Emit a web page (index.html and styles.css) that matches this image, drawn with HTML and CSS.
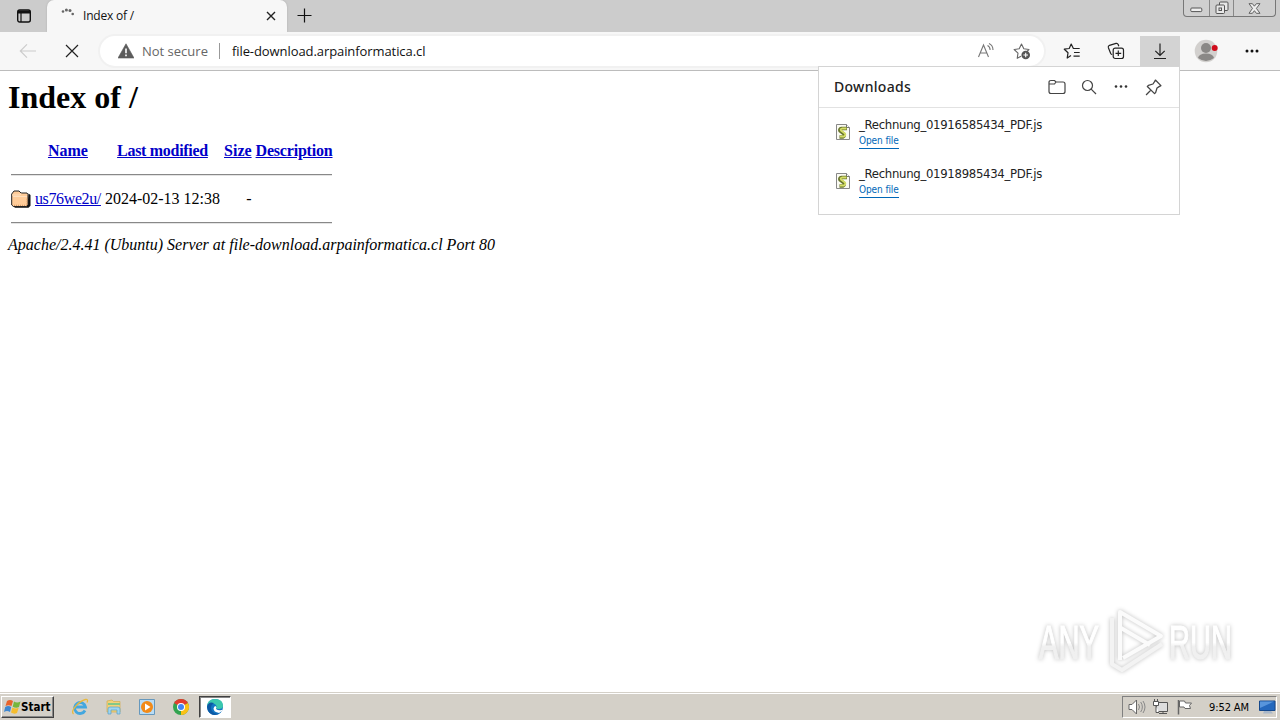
FILE: index.html
```html
<!DOCTYPE html>
<html lang="en">
<head>
<meta charset="utf-8">
<title>Index of /</title>
<link rel="stylesheet" href="styles.css">
</head>
<body>
<header class="tabstrip">
  <div class="tab-actions"><svg width="16" height="16" viewBox="0 0 16 16" fill="none" stroke="#111"><rect x="1.7" y="2" width="12.6" height="12" rx="2" stroke-width="1.4"/><path d="M2 3.500h12M2 4.500h12" stroke-width="2"/><path d="M5 5v9" stroke-width="1.2"/></svg></div>
  <div class="tab">
    <svg class="spinner" width="16" height="16" viewBox="0 0 16 16" fill="#666"><circle cx="3" cy="4.500" r="1.300"/><circle cx="6.400" cy="3" r="1.500"/><circle cx="10" cy="3.400" r="1.500"/><circle cx="12.700" cy="7" r="1.300"/></svg>
    <span class="tab-title">Index of /</span>
    <svg class="tab-close" width="10" height="10" viewBox="0 0 10 10" stroke="#222" stroke-width="1.400"><path d="M1 1l8 8M9 1L1 9"/></svg>
  </div>
  <svg class="new-tab" width="15" height="15" viewBox="0 0 15 15" stroke="#111" stroke-width="1.2"><path d="M7.500 0.500v14M.500 7.500h14"/></svg>
  <div class="window-buttons">
    <span class="wb wb-min"><svg width="13" height="6" viewBox="0 0 13 6" fill="#eee" stroke="#555"><rect x=".8" y="1" width="11" height="3.600" rx="1"/></svg></span>
    <span class="wb wb-max"><svg width="14" height="14" viewBox="0 0 14 14" fill="#e8e8e8" stroke="#555"><rect x="4.500" y="1" width="8.500" height="8.500" rx="1"/><rect x="1" y="4" width="8.500" height="8.500" rx="1"/><rect x="4" y="7" width="2.500" height="2.500"/></svg></span>
    <span class="wb wb-close"><svg width="13" height="11" viewBox="0 0 13 11" fill="#eee" stroke="#555" stroke-width=".9"><path d="M1 .7h3.400l2 2.500 2-2.500H12L8.400 5.400 12 10.300H8.400l-2-2.600-2 2.600H1l3.500-4.900z"/></svg></span>
  </div>
</header>
<nav class="toolbar">
  <span class="nav-btn"><svg width="18" height="16" viewBox="0 0 18 16" fill="none" stroke="#ccc" stroke-width="1.2"><path d="M17 8H1.500M8 1.300L1.300 8 8 14.700"/></svg></span>
  <span class="nav-btn"><svg width="14" height="14" viewBox="0 0 14 14" stroke="#222" stroke-width="1.2"><path d="M1 1l12 12M13 1L1 13"/></svg></span>
  <div class="address">
    <svg class="warn" width="16" height="16" viewBox="0 0 16 16"><path d="M8 .8L16 15H0z" fill="#5c5c5c" stroke="#5c5c5c" stroke-linejoin="round" stroke-width=".6"/><path d="M8 5.500v4.800M8 11.500v1.800" stroke="#fff" stroke-width="1.600"/></svg>
    <span class="not-secure">Not secure</span>
    <span class="divider"></span>
    <span class="url">file-download.arpainformatica.cl</span>
    <svg class="read" width="18" height="18" viewBox="0 0 18 18" fill="none" stroke="#777" stroke-width="1.1"><path d="M1.500 15L6.500 3l5 12M3.200 11h6.600M10.500 3.500c1.700.8 2.600 2.300 2.600 4.500M12 1.500c2.800 1.200 4 3.500 4 6.500"/></svg>
    <svg class="fav" width="18" height="18" viewBox="0 0 18 18" fill="none" stroke="#666" stroke-width="1.1" stroke-linejoin="round"><path d="M8 14.200L4.200 16.300l.8-5.100L1.200 7.500l5-.7L8.500 2l2.300 4.800 5.200.7-2 2"/><circle cx="12.700" cy="13" r="4.300" fill="#555" stroke="none"/><path d="M12.700 10.700v4.600M10.400 13H15" stroke="#fff"/></svg>
  </div>
  <div class="tools">
    <span class="tool"><svg width="18" height="18" viewBox="0 0 18 18" fill="none" stroke="#222" stroke-width="1.2" stroke-linejoin="round"><path d="M8 13.500l-3.800 2.500.8-5.200L1.300 7.200l4.900-.7L8.200 2l2.200 4.500h6.300M11 10.500h5.700M10.500 14.200h6.200"/></svg></span>
    <span class="tool"><svg width="18" height="18" viewBox="0 0 18 18" fill="none" stroke="#222" stroke-width="1.2"><path d="M3.700 11.500L1.400 5.800Q.8 4 2.500 3.300L9 1.400q1.500-.4 2.200 1.100l.6 1.800M3.700 11.500q.5 1 1.500 1"/><rect x="6.200" y="6.200" width="10.300" height="10.300" rx="2"/><path d="M11.300 8.500v5.600M8.500 11.300h5.700"/></svg></span>
    <span class="tool active"><svg width="14" height="18" viewBox="0 0 14 18" fill="none" stroke="#222" stroke-width="1.200"><path d="M7 1.500v12M2.300 8.800L7 13.500l4.700-4.700M1 16.500h12"/></svg></span>
    <span class="tool profile"><svg width="24" height="24" viewBox="0 0 24 24"><circle cx="12" cy="12" r="11.300" fill="#d2d0ce"/><circle cx="12" cy="9" r="5" fill="#8a8886"/><path d="M4 19q1-4.500 8-4.500t8 4.500q-8 6-16 0" fill="#8a8886"/><circle cx="20.700" cy="9" r="3" fill="#d00c1b"/></svg></span>
    <span class="tool"><svg width="14" height="4" viewBox="0 0 14 4" fill="#111"><circle cx="2" cy="2" r="1.500"/><circle cx="7" cy="2" r="1.500"/><circle cx="12" cy="2" r="1.500"/></svg></span>
  </div>
</nav>
<main class="page">
  <h1>Index of /</h1>
  <table class="listing">
    <tr><th class="icon-cell"></th><th class="name"><a href="#">Name</a></th><th class="modified"><a href="#">Last modified</a></th><th class="size"><a href="#">Size</a></th><th class="desc"><a href="#">Description</a></th></tr>
    <tr><th colspan="5"><hr></th></tr>
    <tr><td class="icon-cell"><svg class="folder" width="20" height="22" viewBox="0 0 20 22"><path d="M2 18l2 1.800h13.500l2-2V7l-2-1.500-1 12.500z" fill="#111"/><path d="M.7 6L3 3h5l2 2h6l1 1.500V17l-1.500 1.500H2.500L.7 17z" fill="#fc9" stroke="#222"/><path d="M1 7h8l1-1.500M2 8.500h14" stroke="#ffe0bf" fill="none"/><path d="M3 17.300h13V10" stroke="#cc8d58" stroke-dasharray="1 1" fill="none"/></svg></td><td class="entry"><a href="#">us76we2u/</a></td><td class="right">2024-02-13 12:38</td><td class="right">-</td><td>&nbsp;</td></tr>
    <tr><th colspan="5"><hr></th></tr>
  </table>
  <address>Apache/2.4.41 (Ubuntu) Server at file-download.arpainformatica.cl Port 80</address>
</main>

<section class="downloads">
  <div class="dl-head"><h2>Downloads</h2>
    <span class="dl-icon"><svg width="18" height="16" viewBox="0 0 18 16" fill="none" stroke="#444" stroke-width="1.200"><path d="M1 12.500V3.500Q1 1.500 3 1.500h3.500l1.500 1.500h7q2 0 2 2v7.500q0 2-2 2H3q-2 0-2-2zM1 5h5.500L8 3"/></svg></span>
    <span class="dl-icon"><svg width="16" height="16" viewBox="0 0 16 16" fill="none" stroke="#444" stroke-width="1.200"><circle cx="6.500" cy="6.500" r="5"/><path d="M10.200 10.200L15 15"/></svg></span>
    <span class="dl-icon"><svg width="14" height="4" viewBox="0 0 14 4" fill="#333"><circle cx="2" cy="1.500" r="1.300"/><circle cx="7" cy="1.500" r="1.300"/><circle cx="12" cy="1.500" r="1.300"/></svg></span>
    <span class="dl-icon"><svg width="17" height="17" viewBox="0 0 16 16" fill="none" stroke="#444" stroke-width="1.200" stroke-linejoin="round"><path d="M9.800 1l5.200 5.200-1.700 1-2 1.300-1.300 4.300-1 1-6.800-6.800 1-1L7.500 4.700 8.800 2.700zM5.600 10.400L1 15"/></svg></span>
  </div>
  <div class="dl-item"><svg width="14" height="16" viewBox="0 0 14 16"><path d="M.5.500h10l3 3v12H.5z" fill="#fbfbf3" stroke="#888"/><path d="M10.500.500v3h3" fill="#fff" stroke="#777"/><path d="M11 4.500H5.500Q3 5 4 7l4 3q1 2-1 3H3.500" fill="none" stroke="#69752c" stroke-width="3.400"/><path d="M10.500 4.500H6Q4 5 5 6.500L9 9.500q1 2-1 3H4" fill="none" stroke="#d5de67" stroke-width="1.800"/></svg><div><p>_Rechnung_01916585434_PDF.js</p><a href="#">Open file</a></div></div>
  <div class="dl-item"><svg width="14" height="16" viewBox="0 0 14 16"><path d="M.5.500h10l3 3v12H.5z" fill="#fbfbf3" stroke="#888"/><path d="M10.500.500v3h3" fill="#fff" stroke="#777"/><path d="M11 4.500H5.500Q3 5 4 7l4 3q1 2-1 3H3.500" fill="none" stroke="#69752c" stroke-width="3.400"/><path d="M10.500 4.500H6Q4 5 5 6.500L9 9.500q1 2-1 3H4" fill="none" stroke="#d5de67" stroke-width="1.800"/></svg><div><p>_Rechnung_01918985434_PDF.js</p><a href="#">Open file</a></div></div>
</section>

<svg class="watermark" width="220" height="80" viewBox="0 0 220 80">
  <defs><linearGradient id="fade" x1="0" y1="0" x2="0" y2="1"><stop offset="0.500" stop-color="#fff"/><stop offset="0.580" stop-color="#f0f0f0"/></linearGradient></defs>
  <g class="mark-text"><text x="9" y="59" textLength="60" lengthAdjust="spacingAndGlyphs">ANY</text><text x="139" y="59" textLength="63" lengthAdjust="spacingAndGlyphs">RUN</text></g>
  <g class="mark-logo"><path d="M90 60V12l41 24-38 22"/><path d="M82 18v46l10 6 40-26" stroke="#f3f3f3"/><path d="M91 28l29 17"/></g>
</svg>

<footer class="taskbar">
  <div class="start"><svg width="17" height="16" viewBox="0 0 17 16"><path d="M3 2q3-2 6 0L7.500 7q-3-1.500-6 0z" fill="#e8632b"/><path d="M10 2.500q3 2 6.500 0L15 8q-3 1.500-6.300-.3z" fill="#76b63d"/><path d="M1.200 8q3-1.800 6 0L6 13q-3-1.800-6 0z" fill="#3e87d0"/><path d="M8.400 8.500q3 1.800 6.300.300L13 14q-3 1.500-6-.5z" fill="#f5bd2e"/></svg><b>Start</b></div>
  <div class="quick">
    <span><svg width="18" height="18" viewBox="0 0 18 18" fill="none"><path d="M14 12.500A5.500 5.500 0 1 1 14.500 9H5" stroke="#43a7df" stroke-width="2.800"/><path d="M2.500 16C-1 13 8 3 14.500 1.500q3-.4 1.500 3" stroke="#e9b93b" stroke-width="1.300"/></svg></span>
    <span><svg width="18" height="18" viewBox="0 0 18 18"><path d="M2 3l5-1 1.500 1.500H15V14H2z" fill="#f2d27a" stroke="#d3ac4e" stroke-width=".7"/><path d="M3 5h12v2H3z" fill="#82c888"/><path d="M3 16V11q0-2 2-2h8q2 0 2 2v5h-3v-4H6v4z" fill="#9ed5f0" stroke="#58a2c8" stroke-width=".7"/></svg></span>
    <span><svg width="18" height="18" viewBox="0 0 18 18"><path d="M1.500 1.500h15v15h-15z" fill="#b9dcf5" stroke="#6698bd"/><circle cx="9" cy="9" r="6" fill="#f28a18"/><path d="M7 5.500L12.500 9 7 12.500z" fill="#fff"/></svg></span>
    <span><svg width="18" height="18" viewBox="0 0 18 18"><circle cx="9" cy="9" r="8" fill="#32a350"/><path d="M9 9L2.070 5a8 8 0 0 1 13.860 0z" fill="#e33b2e"/><path d="M9 9L15.930 5A8 8 0 0 1 9 17z" fill="#fbc116"/><circle cx="9" cy="9" r="4" fill="#fff"/><circle cx="9" cy="9" r="3" fill="#4285f4"/></svg></span>
    <span class="running"><svg width="18" height="18" viewBox="0 0 18 18"><circle cx="9" cy="9" r="8" fill="#1275c3"/><path d="M1 8Q2 1 9 1q8 0 8 7 0 3-4 3-3 0-3-1 1-1 0-3Q6 3 1 8" fill="#3bc8ae"/><path d="M9.500 8q1.500 1 .5 3 2.500 2 5.500 1 1.500-1 .5 1L13 15Q7.500 14 7.500 10.500 8 8 9.500 8" fill="#fff"/><path d="M1 9Q2 3 8 5q-5 3-2 8 3 4 8 2-7 5-12-2z" fill="#0c59a4"/></svg></span>
  </div>
  <div class="tray">
    <svg width="18" height="16" viewBox="0 0 18 16" fill="#fff" stroke="#666"><path d="M1 5.500h3L8.500 1v14L4 10.500H1z"/><path d="M10.500 5q2 3 0 6M12.700 3q3.300 5 0 10M15 2q4 6 0 12" fill="none" stroke="#888"/></svg>
    <svg width="18" height="16" viewBox="0 0 18 16" fill="#ddd" stroke="#555"><path d="M4.500 3.500h11v9h-11zM7 14.500h8M11 12.500v2"/><path d="M1.500 2.500h5v4h-5zM2.500 0v2M5.500 0v2M4 7v6.500h3" fill="#fff"/></svg>
    <svg width="18" height="16" viewBox="0 0 18 16" fill="#fff" stroke="#666"><path d="M2.500 1v14.500" stroke-width="1.500"/><path d="M3.500 2h5l1 2h6l-2 2.500 1 3H9l-1-1.500H3.500z"/></svg>
    <span class="clock">9:52 AM</span>
    <svg class="desktop" width="17" height="14" viewBox="0 0 17 14"><path d="M.5 1h15.500v9.500H.5z" fill="#2468bd" stroke="#16498c"/><path d="M1 1.500h14L1 8z" fill="#5795dc"/><path d="M5 11h7l2 2.500H4z" fill="#a9b7c8"/></svg>
  </div>
</footer>
</body>
</html>
```
FILE: styles.css
```css
* { box-sizing: border-box; }
body { margin: 0; width: 1280px; height: 720px; overflow: hidden; background: #fff; display: flex; flex-direction: column; font-family: "Liberation Serif", serif; position: relative; }
svg { display: block; flex: none; }

.tabstrip { height: 32px; flex: none; background: #cccccc; display: flex; align-items: flex-start; }
.tab-actions { width: 47px; height: 32px; display: flex; align-items: center; justify-content: center; }
.tab { width: 240px; height: 32px; background: #f7f7f7; border-radius: 7px 7px 0 0; display: flex; align-items: center; padding: 0 11px 0 13px; box-shadow: 0 0 2px #aaa; }
.spinner { margin-top: -2px; }
.tab-title { font: 12px "Open Sans", sans-serif; color: #111; margin: -1px 0 0 7px; flex: 1; letter-spacing: -.2px; }
.new-tab { margin: 8px 0 0 10px; }
.window-buttons { margin: 0 4px 0 auto; display: flex; height: 17px; border: 1px solid #777; border-top: 0; border-radius: 0 0 4px 4px; background: #cfcfcf; }
.wb { display: flex; align-items: center; justify-content: center; }
.wb-min { width: 25px; padding-top: 4px; }
.wb-max { width: 25px; border: solid #888; border-width: 0 1px; }
.wb-close { width: 41px; }

.toolbar { height: 39px; flex: none; background: #f7f7f7; border-bottom: 1px solid #bcbcbc; display: flex; align-items: center; padding-left: 6px; }
.nav-btn { width: 44px; display: flex; justify-content: center; }
.address { width: 944px; height: 30px; margin-left: 6px; border-radius: 15px; background: #fff; box-shadow: 0 0 0 2px #f1f1f1; display: flex; align-items: center; padding: 0 13px 0 18px; font-family: "Open Sans", sans-serif; font-size: 13px; }
.not-secure { margin-left: 8px; color: #666; letter-spacing: 0; }
.divider { width: 1px; height: 16px; background: #999; margin: 0 12px 0 11px; }
.url { color: #111; flex: 1; letter-spacing: -.08px; }
.fav { margin-left: 18px; }
.tools { display: flex; align-items: center; height: 100%; margin-left: 8px; }
.tool { width: 40px; height: 30px; margin-right: 4px; display: flex; align-items: center; justify-content: center; }
.tool.active { background: #d3d3d3; }
.tool.profile { margin: 0 6px 0 2px; }

.page { flex: 1; padding: 8px; }
h1 { font-size: 32px; line-height: 37px; margin: 0 0 21px; }
.listing { border-spacing: 2px; font-size: 16px; line-height: 18px; }
.listing th, .listing td { padding: 1px; }
.listing a { color: #0000c8; }
.icon-cell { width: 22px; height: 24px; }
.name { letter-spacing: 0; }
.modified { letter-spacing: -.3px; }
.desc { letter-spacing: -.2px; }
.entry { letter-spacing: -.38px; }
.right { text-align: right; }
hr { margin: 8px 0; height: 2px; border: 0; border-top: 1px solid #888; border-bottom: 1px solid #e4e4e4; }
address { font-size: 16px; line-height: 18px; margin-top: 1px; }

.downloads { position: absolute; left: 818px; top: 66px; width: 362px; height: 149px; background: #fff; border: 1px solid #d4d4d4; font-family: "DejaVu Sans", sans-serif; font-stretch: condensed; color: #222; }
.dl-head { height: 41px; border-bottom: 1px solid #e2e2e2; display: flex; align-items: center; padding: 0 10px 0 15px; }
.dl-head h2 { margin: -2px 0 0; flex: 1; font: 500 14px "Noto Sans", sans-serif; letter-spacing: .3px; }
.dl-icon { width: 32px; display: flex; justify-content: center; }
.dl-item { height: 49px; display: flex; padding: 8px 0 0 17px; }
.dl-item svg { margin-top: 8px; }
.dl-item div { margin-left: 9px; }
.dl-item p { margin: 0; font-size: 13px; line-height: 17px; letter-spacing: -.3px; }
.dl-item a { display: block; width: 40px; font-size: 10px; line-height: 15px; height: 16px; color: #0067b8; text-decoration: none; border-bottom: 1px solid #0067b8; white-space: nowrap; letter-spacing: -.1px; }

.watermark { position: absolute; left: 1030px; top: 600px; filter: drop-shadow(0 0 2px rgba(0,0,0,.25)); }
.mark-text { font: 48px "Liberation Sans", sans-serif; fill: url(#fade); stroke: url(#fade); stroke-width: 1.2; }
.mark-logo { fill: none; stroke: #fbfbfb; stroke-width: 4; stroke-linejoin: round; }

.taskbar { height: 28px; flex: none; background: #d4d0c8; border-top: 1px solid #d4d0c8; box-shadow: inset 0 1px #fff; display: flex; align-items: center; padding: 1px 3px 0 1px; font-family: "DejaVu Sans", sans-serif; font-stretch: condensed; }
.start { width: 53px; height: 22px; border: 1px solid; border-color: #fff #404040 #404040 #fff; box-shadow: inset -1px -1px #888; display: flex; align-items: center; padding-left: 2px; font-size: 11.5px; }
.quick { display: flex; margin-left: 9px; }
.quick span { width: 33.8px; height: 22px; display: flex; align-items: center; justify-content: center; }
.quick .running { width: 32px; margin-left: 1px; background: #fff; border: 1px solid; border-color: #404040 #fff #fff #404040; box-shadow: inset 1px 1px #888; }
.tray { margin-left: auto; width: 155px; height: 22px; border: 1px solid; border-color: #808080 #fff #fff #808080; display: flex; align-items: center; padding-left: 5px; gap: 6px; }
.clock { font-size: 11px; margin-left: 9px; white-space: nowrap; letter-spacing: -.1px; }
.desktop { margin-left: 4px; }
```
